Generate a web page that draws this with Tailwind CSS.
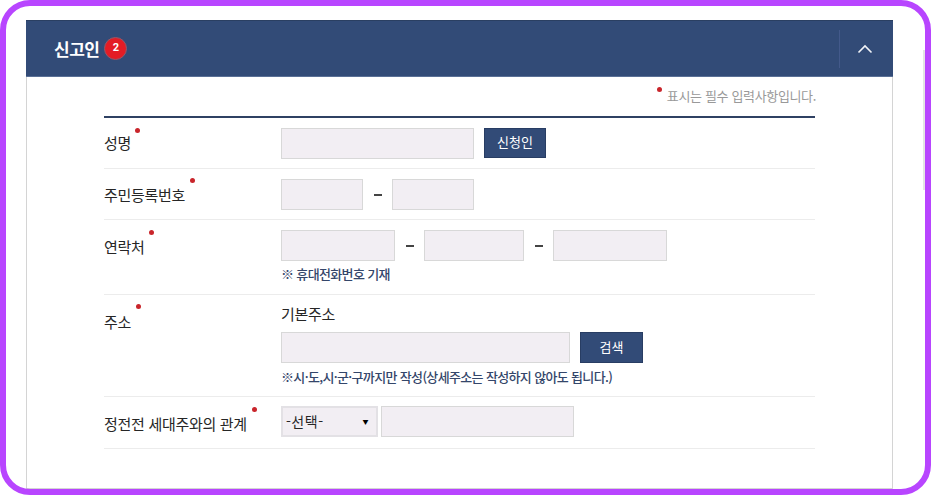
<!doctype html>
<html lang="ko">
<head>
<meta charset="utf-8">
<script src="https://cdn.jsdelivr.net/npm/@tailwindcss/browser@4"></script>
</head>
<body class="bg-white font-['Noto_Sans_CJK_KR','Noto_Sans',sans-serif]">
<div class="relative h-[495px] w-[931px] overflow-hidden bg-white pl-[26px] pt-5">
  <div class="flex h-[469px] w-[867px] flex-col border-x border-b border-[#d4d4d4] bg-white">
    <header class="-mx-px flex h-[57px] shrink-0 items-center justify-between border-y border-t-[#2a3f62] border-b-[#5a7096] bg-[#324b77]">
      <div class="flex items-center gap-[5px] pl-7">
        <h2 class="text-[17px] font-bold tracking-[-0.5px] text-white">신고인</h2>
        <span class="flex size-[23px] items-center justify-center rounded-full border border-[#8e5a6c] bg-[#e31c25] font-['Roboto'] text-[11px] font-bold text-white">2</span>
      </div>
      <div class="flex h-[38px] w-[54px] items-center justify-center border-l border-[#43598a]">
        <svg class="mr-[3px]" width="16" height="10" viewBox="0 0 16 10" fill="none" stroke="#f2f4f8" stroke-width="1.6"><path d="M1.500 8.500 8 2l6.500 6.500"/></svg>
      </div>
    </header>
    <div class="ml-[77px] w-[711px]">
      <p class="flex h-[39px] items-start justify-end pt-[9px] text-[13px] tracking-[-0.35px] text-[#999]"><span class="mr-[5px] mt-[1px] size-[5px] rounded-full bg-[#c9252b]"></span><span class="-mr-[1px]">표시는 필수 입력사항입니다.</span></p>
      <div class="border-t-2 border-[#2f4163]">
        <div class="flex h-[51px] border-b border-[#ececec]">
          <div class="relative w-[177px] pt-[14px] text-[15px] leading-[22px] tracking-[-0.3px] text-[#262626]">성명<span class="absolute left-[31px] top-[10px] size-[5px] rounded-full bg-[#c9252b]"></span></div>
          <div class="flex items-start gap-[10px] pt-[10px]">
            <div class="h-[31px] w-[193px] border border-[#d8d8d8] bg-[#f2eef3]"></div>
            <button class="h-[30px] w-[62px] border border-[#283d63] bg-[#324b77] pb-[2px] text-[13px] text-white">신청인</button>
          </div>
        </div>
        <div class="flex h-[51px] border-b border-[#ececec]">
          <div class="relative w-[177px] pt-[15px] text-[15px] leading-[22px] tracking-[-0.3px] text-[#262626]">주민등록번호<span class="absolute left-[86px] top-[9px] size-[5px] rounded-full bg-[#c9252b]"></span></div>
          <div class="flex items-start pt-[10px]">
            <div class="h-[31px] w-[82px] border border-[#d8d8d8] bg-[#f2eef3]"></div>
            <span class="flex h-[31px] w-[29px] items-center justify-center"><span class="h-[2px] w-[8px] bg-[#444]"></span></span>
            <div class="h-[31px] w-[82px] border border-[#d8d8d8] bg-[#f2eef3]"></div>
          </div>
        </div>
        <div class="flex h-[75px] border-b border-[#ececec]">
          <div class="relative w-[177px] pt-[16px] text-[15px] leading-[22px] tracking-[-0.3px] text-[#262626]">연락처<span class="absolute left-[45px] top-[10px] size-[5px] rounded-full bg-[#c9252b]"></span></div>
          <div class="pt-[10px]">
            <div class="flex items-start">
              <div class="h-[31px] w-[114px] border border-[#d8d8d8] bg-[#f2eef3]"></div>
              <span class="flex h-[31px] w-[29px] items-center justify-center"><span class="h-[2px] w-[8px] bg-[#444]"></span></span>
              <div class="h-[31px] w-[100px] border border-[#d8d8d8] bg-[#f2eef3]"></div>
              <span class="flex h-[31px] w-[29px] items-center justify-center"><span class="h-[2px] w-[8px] bg-[#444]"></span></span>
              <div class="h-[31px] w-[114px] border border-[#d8d8d8] bg-[#f2eef3]"></div>
            </div>
            <p class="mt-[4px] text-[13px] font-medium leading-[18px] tracking-[-0.65px] text-[#34466a]">※ 휴대전화번호 기재</p>
          </div>
        </div>
        <div class="flex h-[102px] border-b border-[#ececec]">
          <div class="relative w-[177px] pt-[16px] text-[15px] leading-[22px] tracking-[-0.3px] text-[#262626]">주소<span class="absolute left-[32px] top-[9px] size-[5px] rounded-full bg-[#c9252b]"></span></div>
          <div class="pt-[8px]">
            <p class="text-[15px] leading-[21px] tracking-[-0.3px] text-[#262626]">기본주소</p>
            <div class="mt-[8px] flex items-start gap-[10px]">
              <div class="h-[31px] w-[289px] border border-[#d8d8d8] bg-[#f2eef3]"></div>
              <button class="h-[31px] w-[63px] border border-[#283d63] bg-[#324b77] pb-[1px] text-[13px] text-white">검색</button>
            </div>
            <p class="mt-[5px] text-[13px] font-medium leading-[18px] tracking-[-0.65px] text-[#34466a]">※시·도,시·군·구까지만 작성(상세주소는 작성하지 않아도 됩니다.)</p>
          </div>
        </div>
        <div class="flex h-[52px] border-b border-[#ececec]">
          <div class="relative w-[177px] pt-[16px] text-[15px] leading-[22px] tracking-[-0.3px] text-[#262626]">정전전 세대주와의 관계<span class="absolute left-[148px] top-[10px] size-[5px] rounded-full bg-[#c9252b]"></span></div>
          <div class="flex items-start gap-[3px] pt-[9px]">
            <div class="flex h-[31px] w-[97px] items-center justify-between border-2 border-[#e3e1e5] bg-[#f2eef3] pl-[3px] pr-[7px] text-[14px] tracking-[0.5px] text-[#262626]"><span>-선택-</span><span class="text-[6px] text-black">▼</span></div>
            <div class="h-[31px] w-[193px] border border-[#d8d8d8] bg-[#f2eef3]"></div>
          </div>
        </div>
      </div>
    </div>
  </div>
  <div class="absolute right-[6px] top-[50px] h-[140px] w-[2px] bg-[#e4e4e4]"></div>
  <div class="pointer-events-none absolute inset-0 rounded-[30px] border-[6px] border-[#b845ff]"></div>
</div>
</body>
</html>
